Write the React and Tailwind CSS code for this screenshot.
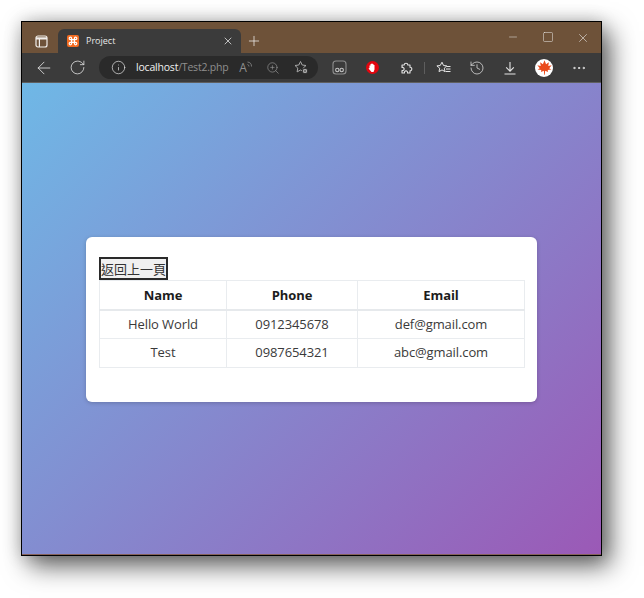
import { X, Plus, Minus, Square, ArrowLeft, RotateCw, Info, ZoomIn, History, MoreHorizontal } from 'lucide-react';

const rows = [
  { name: 'Hello World', phone: '0912345678', email: 'def@gmail.com' },
  { name: 'Test', phone: '0987654321', email: 'abc@gmail.com' },
];

function TabBar() {
  return (
    <div className="flex h-[31px] items-end bg-[#6e5239]">
      <div className="flex h-[31px] w-[36px] items-center justify-center pl-[2px] pt-[7px]">
        <svg width="13" height="13" viewBox="0 0 13 13" fill="none" stroke="#f2efec" strokeWidth="1.2">
          <rect x="1" y="1" width="11" height="11" rx="2" />
          <path d="M1 3.4h11" strokeWidth="2.2" />
          <path d="M4.4 4v8" />
        </svg>
      </div>
      <div className="flex h-[24px] w-[183px] items-center rounded-t-md bg-[#3b3b3b] pl-[9px] pr-[7px]">
        <div className="flex h-3 w-3 items-center justify-center rounded-[2px] bg-[#f26b21]">
          <svg width="10" height="10" viewBox="0 0 10 10" fill="none" stroke="#fff" strokeWidth="1.2">
            <path d="M3.6 3.6H2.4a1.2 1.2 0 1 1 1.2-1.2v5.2a1.2 1.2 0 1 1-1.2-1.2h5.2a1.2 1.2 0 1 1-1.2 1.2V2.4a1.2 1.2 0 1 1 1.2 1.2z" />
          </svg>
        </div>
        <span className="ml-[7px] flex-1 text-[9px] text-[#e8e8e8]">Project</span>
        <X size={12} strokeWidth={1.5} className="text-[#ececec]" />
      </div>
      <div className="flex h-[31px] w-[24px] items-center justify-center pl-[1px] pt-[7px]">
        <Plus size={16} strokeWidth={1.1} className="text-[#f4f4f4]" />
      </div>
      <div className="flex h-[31px] flex-1 items-start justify-end pr-[1px] pt-[9px] text-[#e6e3df]">
        <div className="flex w-[35px] justify-center"><Minus size={12} strokeWidth={1.1} /></div>
        <div className="flex w-[35px] justify-center"><Square size={12} strokeWidth={1.1} /></div>
        <div className="flex w-[35px] justify-center"><X size={14} strokeWidth={1.1} /></div>
      </div>
    </div>
  );
}

function ToolBar() {
  return (
    <div className="flex h-[30px] items-center border-b border-[#5f5f5f] bg-[#3b3b3b] text-[#e6e6e6]">
      <div className="flex w-[43px] justify-center"><ArrowLeft size={20} strokeWidth={1} /></div>
      <div className="flex w-[24px] justify-center"><RotateCw size={17} strokeWidth={1.1} /></div>
      <div className="ml-[10px] flex h-[23px] w-[219px] items-center rounded-full bg-[#2a2a2a] pl-[12px]">
        <Info size={15} strokeWidth={1.1} />
        <span className="ml-[10px] w-[96px] text-[10.5px] tracking-[-0.2px] text-[#f0f0f0]">localhost<span className="text-[#8f8f8f]">/Test2.php</span></span>
        <div className="flex w-[27px] items-start justify-center text-[#8f8f8f]">
          <span className="text-[12px] leading-[14px]">A</span>
          <svg width="5" height="6" viewBox="0 0 5 6" fill="none" stroke="#8f8f8f" strokeWidth="0.8">
            <path d="M0.5 3.5a2 2 0 0 1 1.5 2M0.5 1a4.5 4.5 0 0 1 4 4.5" />
          </svg>
        </div>
        <div className="flex w-[28px] justify-center"><ZoomIn size={14} strokeWidth={1.1} className="text-[#9a9a9a]" /></div>
        <div className="flex w-[28px] justify-center">
          <svg width="15" height="15" viewBox="0 0 15 15" fill="none" stroke="#a8a8a8" strokeWidth="1">
            <path d="M6.5 1.5l1.7 3.5 3.8.5-2.8 2.6.7 3.8-3.4-1.9-3.4 1.9.7-3.8L1 5.5 4.8 5z" />
            <circle cx="11" cy="11" r="2.8" fill="#a8a8a8" stroke="#2a2a2a" />
            <circle cx="11" cy="11" r="0.8" fill="#2a2a2a" stroke="none" />
          </svg>
        </div>
      </div>
      <div className="ml-[5px] flex w-[32px] justify-center">
        <svg width="15" height="15" viewBox="0 0 15 15" fill="none" stroke="#8e8e8e" strokeWidth="1.1">
          <rect x="1" y="1" width="13" height="13" rx="3" />
          <circle cx="5.3" cy="10" r="1.7" stroke="#c4c4c4" />
          <circle cx="9.7" cy="10" r="1.7" stroke="#c4c4c4" />
        </svg>
      </div>
      <div className="flex w-[34px] justify-center">
        <div className="flex h-[13px] w-[13px] items-center justify-center rounded-full bg-[#e2060f]">
          <svg width="8" height="9" viewBox="0 0 8 9" fill="#fff">
            <path d="M1.5 2.5h1V1h1v-.5h1V1h1v1h1v4.5L5.5 9h-2L.5 5.5l1-.5z" />
          </svg>
        </div>
      </div>
      <div className="flex w-[34px] justify-center">
        <svg width="14" height="14" viewBox="0 0 14 14" fill="none" stroke="#e2e2e2" strokeWidth="1.1" strokeLinejoin="round">
          <path d="M3 4h2.2a1.8 1.8 0 1 1 3.6 0H11v2.2a1.8 1.8 0 1 1 0 3.6V12H8.5a1.6 1.6 0 1 0-3 0H3V9.5a1.6 1.6 0 1 0 0-3z" />
        </svg>
      </div>
      <div className="ml-[1px] h-[12px] w-px bg-[#5e5e5e]" />
      <div className="flex w-[36px] justify-center">
        <svg width="15" height="14" viewBox="0 0 15 14" fill="none" stroke="#e6e6e6" strokeWidth="1">
          <path d="M6 1.2l1.5 3.3 3.3.4-2.5 2.3.7 3.4-3-1.7-3 1.7.7-3.4L.9 4.9l3.3-.4z" />
          <path d="M10.5 5.5h4M10 8h4.5M9.5 10.5h5" />
        </svg>
      </div>
      <div className="flex w-[32px] justify-center"><History size={16} strokeWidth={1.1} /></div>
      <div className="flex w-[34px] justify-center">
        <svg width="14" height="14" viewBox="0 0 14 14" fill="none" stroke="#e6e6e6" strokeWidth="1.1">
          <path d="M7 1v9M3.2 6.4 7 10.2l3.8-3.8M1.5 13h11" />
        </svg>
      </div>
      <div className="flex w-[34px] justify-center">
        <div className="flex h-[18px] w-[18px] items-center justify-center rounded-full bg-white">
          <svg width="15" height="15" viewBox="0 0 14 14" fill="#ea4a1b">
            <path d="M7 0.3l1.5 3.7 2.6-1.9-.6 3.4 3.2-.6-2.3 2.7 2.1 1.2-3.5.6.3 1.8L7.6 10l-.3 3.7h-.6L6.4 10l-2.7 1.2.3-1.8-3.5-.6 2.1-1.2L.3 4.9l3.2.6-.6-3.4L5.5 4z" />
          </svg>
        </div>
      </div>
      <div className="flex w-[36px] justify-center"><MoreHorizontal size={16} strokeWidth={1.5} /></div>
    </div>
  );
}

export default function App() {
  return (
    <div className="h-[598px] w-[644px] bg-white pl-[21px] pt-[21px] font-['Open_Sans','Noto_Sans_CJK_TC',sans-serif]">
      <div className="flex h-[535px] w-[581px] flex-col border border-black shadow-[8px_10px_24px_rgba(0,0,0,0.62),0_0_16px_rgba(0,0,0,0.18)]">
        <TabBar />
        <ToolBar />
        <div className="flex flex-1 items-center justify-center border-b border-[#85625a] bg-[linear-gradient(135deg,#6fb8e6,#9b59b6)] pt-[2px]">
          <div className="h-[165px] w-[451px] rounded-md bg-white px-[13px] pt-[20px] shadow-[0_1px_4px_rgba(0,0,0,0.2)]">
            <button className="block h-[23px] w-[69px] whitespace-nowrap border-2 border-[#2a2a2a] bg-[#f0f0f0] px-0 text-[13px] leading-[18px] text-[#333] font-['Noto_Sans_CJK_TC',sans-serif]">返回上一頁</button>
            <table className="w-[426px] table-fixed border-collapse text-center text-[13px] tracking-[-0.1px] text-[#3a3a3a]">
              <thead>
                <tr className="h-[29px] border-b-2 border-[#e6e9ec] text-[#1c1c1c]">
                  <th className="w-[127px] border border-[#e9ecef] pt-[2px] font-bold">Name</th>
                  <th className="w-[131px] border border-[#e9ecef] pt-[2px] font-bold">Phone</th>
                  <th className="border border-[#e9ecef] pt-[2px] font-bold">Email</th>
                </tr>
              </thead>
              <tbody>
                {rows.map((r) => (
                  <tr key={r.name} className="h-[29px]">
                    <td className="border border-[#e9ecef]">{r.name}</td>
                    <td className="border border-[#e9ecef]">{r.phone}</td>
                    <td className="border border-[#e9ecef]">{r.email}</td>
                  </tr>
                ))}
              </tbody>
            </table>
          </div>
        </div>
      </div>
    </div>
  );
}
